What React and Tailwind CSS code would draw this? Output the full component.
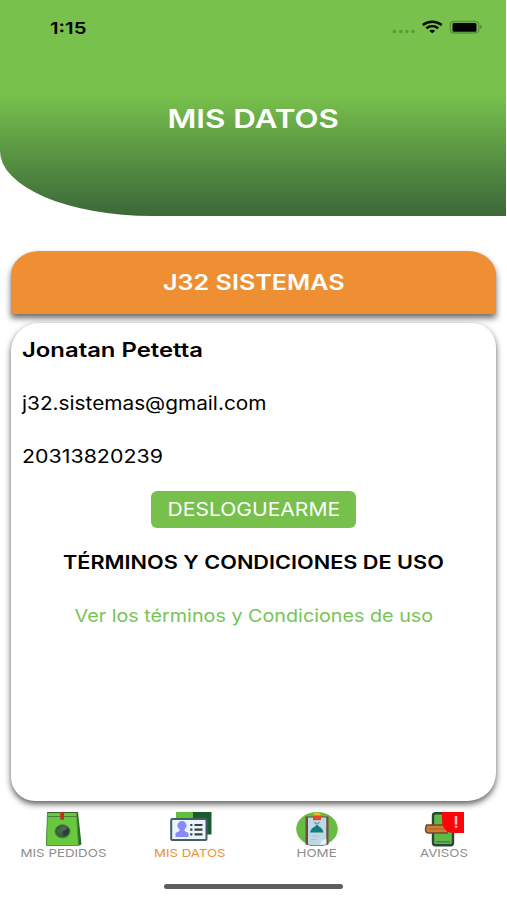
import { useLayoutEffect, useRef } from "react";

// Wide text: the glyphs are stretched horizontally, keeping their height.
function Wide({ children, className = "", width }) {
  const ref = useRef(null);
  useLayoutEffect(() => {
    const el = ref.current;
    const fit = () => {
      el.style.transform = "none";
      el.style.transform = `scaleX(${width / el.offsetWidth})`;
    };
    fit();
    document.fonts.ready.then(fit);
  }, [width]);
  return (
    <span ref={ref} className={`inline-block whitespace-nowrap ${className}`}>
      {children}
    </span>
  );
}

function StatusIcons() {
  return (
    <svg width="94" height="16" viewBox="0 0 94 16">
      <g fill="#5b9838">
        <circle cx="4.5" cy="11.5" r="1.8" />
        <circle cx="10.8" cy="11.5" r="1.8" />
        <circle cx="16.8" cy="11.5" r="1.8" />
        <circle cx="22.8" cy="11.5" r="1.8" />
      </g>
      <g fill="none" stroke="#050a03" strokeWidth="2.6">
        <path d="M32.8 5C38.3 .7 46.200 .7 51.700 5" />
        <path d="M36.300 8.300C39.800 5.500 44.700 5.500 48.200 8.300" />
      </g>
      <path d="M42.250 13.200L39.300 10.900C40.800 9.200 43.700 9.200 45.200 10.900Z" fill="#050a03" />
      <rect x="60.300" y="1.500" width="28.500" height="11.500" rx="3.500" fill="none" stroke="#57913a" strokeWidth="1.400" />
      <rect x="62.500" y="3" width="24" height="8.700" rx="1.500" fill="#000" />
      <path d="M90.300 5v4c2.100-.7 2.100-3.300 0-4Z" fill="#4b8230" />
    </svg>
  );
}

function BagIcon() {
  return (
    <svg width="36" height="34" viewBox="0 0 36 34">
      <path d="M1.500 0H32l3.500 32.500-2.500 1H0Z" fill="#2d6b2d" />
      <path d="M1.500 0H30.500l2 33.500H.5Z" fill="#68c83e" stroke="#4a8f30" strokeWidth=".8" />
      <path d="M1.500 4.500H31" stroke="#477f35" strokeWidth="1" />
      <path d="M1.500 .5H31" stroke="#3b5a35" strokeWidth="1" />
      <rect x="14.300" y="0" width="3.700" height="7.700" fill="#c32a25" />
      <ellipse cx="16.500" cy="19.300" rx="7.500" ry="6.600" fill="#3b5b42" stroke="#50813d" />
      <path d="M11.500 17l5-3 1.500 4-4 4-3-1Z" fill="#466a45" />
      <path d="M17 20l5-4 1.500 2-2 5-4 1Z" fill="#273f3b" />
      <path d="M16.500 14.500l5 2-4 1.500Z" fill="#75606a" />
    </svg>
  );
}

function CardIcon() {
  return (
    <svg width="42" height="29" viewBox="0 0 42 29">
      <path d="M6 0h18v12H6Z" fill="#61bd3d" />
      <path d="M23 0h18.500v22.500H23Z" fill="#195c2e" />
      <rect x="1.200" y="7" width="35.300" height="21" rx="1" fill="#edf2fb" stroke="#415f64" strokeWidth="2" />
      <ellipse cx="12" cy="13.500" rx="4.600" ry="4.400" fill="#858cf4" />
      <path d="M9.500 15.500h5V19l4 2v4H5.500v-4l4-2Z" fill="#858cf4" />
      <path d="M20.200 13h2.200M24.500 13h8M20.200 17.700h2.200M24.500 17.700h8M20.200 22.400h2.200M24.500 22.400h8" stroke="#35464b" strokeWidth="2.200" />
    </svg>
  );
}

function ClipboardIcon() {
  return (
    <svg width="42" height="34" viewBox="0 0 42 34">
      <ellipse cx="21" cy="17" rx="20.800" ry="17" fill="#67bd42" />
      <path d="M9.500 4.500h23v28q-11.500 3-23 0Z" fill="#714a43" />
      <path d="M12 5.500h18.300v27q-9 2-18.300 0Z" fill="#bed9e2" />
      <path d="M24 33l1.500-4.500 4.800-1.500v5Z" fill="#e6f1f5" />
      <path d="M14 20.500q1-4.500 5-6l2-2 2 2q3.500 1.500 4.500 6Z" fill="#147b82" />
      <path d="M18.500 10q2 4 5 0" fill="none" stroke="#50959d" strokeWidth="1.200" />
      <path d="M15 24h8M15 27.500h6" stroke="#a6c6d0" />
      <path d="M17.500 4V2.500q0-2 3.500-2t3.500 2V4Z" fill="#f2b62e" />
      <path d="M17 3.500h8v4.700h-8Z" fill="#e34530" />
    </svg>
  );
}

function AlertIcon() {
  return (
    <svg width="40" height="35" viewBox="0 0 40 35">
      <rect x="9" y="1.200" width="20" height="32" rx="2.500" fill="#5fb946" stroke="#2a4634" strokeWidth="2.400" />
      <path d="M12 29.800h14" stroke="#3c7a3c" strokeWidth="1.200" />
      <path d="M2.500 13H22l4 3.500-3 4.500H4.500Q1.500 21 1.500 17Z" fill="#d07a33" stroke="#70472c" strokeWidth="1.500" />
      <path d="M5 17h15" stroke="#a8622c" />
      <path d="M18 0h22v21H28.500Q18 20 18 7Z" fill="#fb0509" />
      <path d="M32 4v8.500M32 13.700v2" stroke="#ffbfc0" strokeWidth="2.500" />
    </svg>
  );
}

const tabs = [
  { label: "MIS PEDIDOS", width: 86, Icon: BagIcon, active: false },
  { label: "MIS DATOS", width: 72, Icon: CardIcon, active: true },
  { label: "HOME", width: 40, Icon: ClipboardIcon, active: false },
  { label: "AVISOS", width: 48, Icon: AlertIcon, active: false },
];

export default function App() {
  return (
    <div className="flex h-[900px] w-[507px] flex-col overflow-hidden bg-white font-[Inter,sans-serif] text-black">
      <header className="h-[216px] w-[506px] shrink-0 rounded-bl-[152px_65px] bg-linear-to-b from-[#78c14c] from-44% to-[#3c6838]">
        <div className="flex h-14 items-center justify-between pl-[50px] pr-[22px]">
          <Wide width={37} className="origin-left text-[16.5px] font-semibold leading-6">1:15</Wide>
          <StatusIcons />
        </div>
        <h1 className="flex h-[124px] items-center justify-center text-[26px] font-semibold text-white">
          <Wide width={171}>MIS DATOS</Wide>
        </h1>
      </header>

      <main className="flex flex-col px-[11px] pt-[35px]">
        <section className="flex h-[63px] items-center justify-center rounded-t-[28px_24px] bg-[#ee8f34] text-[21px] font-semibold text-white shadow-[0_4px_6px_rgba(0,0,0,0.6)]">
          <Wide width={182}>J32 SISTEMAS</Wide>
        </section>
        <section className="mt-[9px] flex h-[478px] flex-col rounded-[28px_24px] bg-white pt-px text-[18.5px] shadow-[0_3px_6px_rgba(0,0,0,0.65)]">
          <p className="flex h-[53px] items-center pl-[11px] text-[19.5px] font-semibold">
            <Wide width={181} className="origin-left">Jonatan Petetta</Wide>
          </p>
          <p className="flex h-[53px] items-center pl-[11px]">
            <Wide width={245} className="origin-left">j32.sistemas@gmail.com</Wide>
          </p>
          <p className="flex h-[53px] items-center pl-[11px]">
            <Wide width={141} className="origin-left">20313820239</Wide>
          </p>
          <div className="flex h-[53px] items-center justify-center">
            <button className="flex h-[37px] w-[205px] items-center justify-center rounded-[6px] bg-[#77c04b] text-white">
              <Wide width={173}>DESLOGUEARME</Wide>
            </button>
          </div>
          <h2 className="flex h-[53px] items-center justify-center font-semibold">
            <Wide width={381}>TÉRMINOS Y CONDICIONES DE USO</Wide>
          </h2>
          <a className="flex h-[54px] items-center justify-center text-[17.500px] text-[#77c456]">
            <Wide width={359}>Ver los términos y Condiciones de uso</Wide>
          </a>
        </section>
      </main>

      <nav className="mt-[11px] grid w-[507px] grid-cols-4">
        {tabs.map(({ label, width, Icon, active }) => (
          <div key={label} className="flex flex-col items-center">
            <div className="flex h-[34px] items-start pl-px"><Icon /></div>
            <Wide width={width} className={`text-[11px] leading-[14px] ${active ? "text-[#ee8f34]" : "text-[#8d8d8d]"}`}>{label}</Wide>
          </div>
        ))}
      </nav>
      <div className="ml-[164px] mt-6 h-[5px] w-[179px] rounded-full bg-[#5d5f5e]" />
    </div>
  );
}
